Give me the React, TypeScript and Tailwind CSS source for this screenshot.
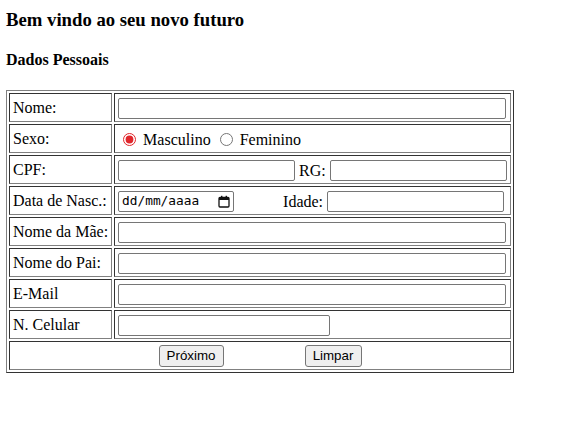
import React from 'react';

const serif = "font-['Liberation_Serif','Times_New_Roman',serif]";
const textInput = 'h-[21px] border border-[#767676] rounded-[2px] bg-white px-[2px] text-[13px]';

// cell borders: inset look (dark top/left, grey bottom/right)
const cell =
  'border border-t-[#333] border-l-[#333] border-b-[#808080] border-r-[#808080] px-[3px] py-0 h-[29px] align-middle';

const Row = ({ label, children }: { label: string; children: React.ReactNode }) => (
  <tr>
    <td className={`${cell} w-[103px] whitespace-nowrap text-left`}>{label}</td>
    <td className={`${cell} w-[397px]`}>
      <div className="flex items-center h-[27px] pt-[2px]">{children}</div>
    </td>
  </tr>
);

const CalendarIcon = () => (
  <svg width="12" height="13" viewBox="0 0 12 13" className="shrink-0">
    <rect x="1" y="2.5" width="10" height="9.5" rx="1" fill="none" stroke="#111" strokeWidth="1.3" />
    <rect x="1" y="2.5" width="10" height="2.5" fill="#111" />
    <rect x="3" y="0.8" width="1.4" height="2" fill="#111" />
    <rect x="7.6" y="0.8" width="1.4" height="2" fill="#111" />
  </svg>
);

export default function App() {
  return (
    <div className={`${serif} text-black bg-white min-h-screen pl-[6px] text-[16px]`}>
      <h1 className="pt-[9px] text-[18.72px] font-bold leading-[22px]">Bem vindo ao seu novo futuro</h1>
      <h2 className="mt-[20px] text-[16px] font-bold leading-[18px]">Dados Pessoais</h2>

      <form className="mt-[21px]">
        <table className="w-[508px] border-separate border-spacing-[2px] border border-t-[#808080] border-l-[#808080] border-b-[#333] border-r-[#333] leading-[18px]">
          <tbody>
            <Row label="Nome:">
              <input type="text" className={`${textInput} w-[388px]`} />
            </Row>
            <Row label="Sexo:">
              <label className="flex items-center">
                <input type="radio" name="sexo" defaultChecked className="w-[13px] h-[13px] ml-[5px] mr-[7px] accent-[#e0262b]" />
                Masculino
              </label>
              <label className="flex items-center">
                <input type="radio" name="sexo" className="w-[13px] h-[13px] ml-[9px] mr-[7px] accent-[#e0262b]" />
                Feminino
              </label>
            </Row>
            <Row label="CPF:">
              <input type="text" className={`${textInput} w-[177px]`} />
              <span className="ml-[4px] mr-[4px]">RG:</span>
              <input type="text" className={`${textInput} w-[177px]`} />
            </Row>
            <Row label="Data de Nasc.:">
              <div className="w-[116px] h-[21px] border border-[#767676] rounded-[2px] flex items-center justify-between pl-[3px] pr-[3px]">
                <span className="font-['DejaVu_Sans_Mono','Liberation_Mono',monospace] text-[12.8px] leading-none">dd/mm/aaaa</span>
                <CalendarIcon />
              </div>
              <span className="ml-[49px] mr-[4px]">Idade:</span>
              <input type="text" className={`${textInput} w-[177px]`} />
            </Row>
            <Row label="Nome da Mãe:">
              <input type="text" className={`${textInput} w-[388px]`} />
            </Row>
            <Row label="Nome do Pai:">
              <input type="text" className={`${textInput} w-[388px]`} />
            </Row>
            <Row label="E-Mail">
              <input type="email" className={`${textInput} w-[388px]`} />
            </Row>
            <Row label="N. Celular">
              <input type="tel" className={`${textInput} w-[212px]`} />
            </Row>
            <tr>
              <td colSpan={2} className={cell}>
                <div className="flex justify-center items-center gap-[81px] h-[27px] pt-[1px] font-['Liberation_Sans',Arial,sans-serif] text-[13.33px]">
                  <button type="button" className="w-[65px] h-[22px] bg-[#efefef] border border-[#767676] rounded-[3px] leading-none">
                    Próximo
                  </button>
                  <button type="reset" className="w-[57px] h-[22px] bg-[#efefef] border border-[#767676] rounded-[3px] leading-none">
                    Limpar
                  </button>
                </div>
              </td>
            </tr>
          </tbody>
        </table>
      </form>
    </div>
  );
}
